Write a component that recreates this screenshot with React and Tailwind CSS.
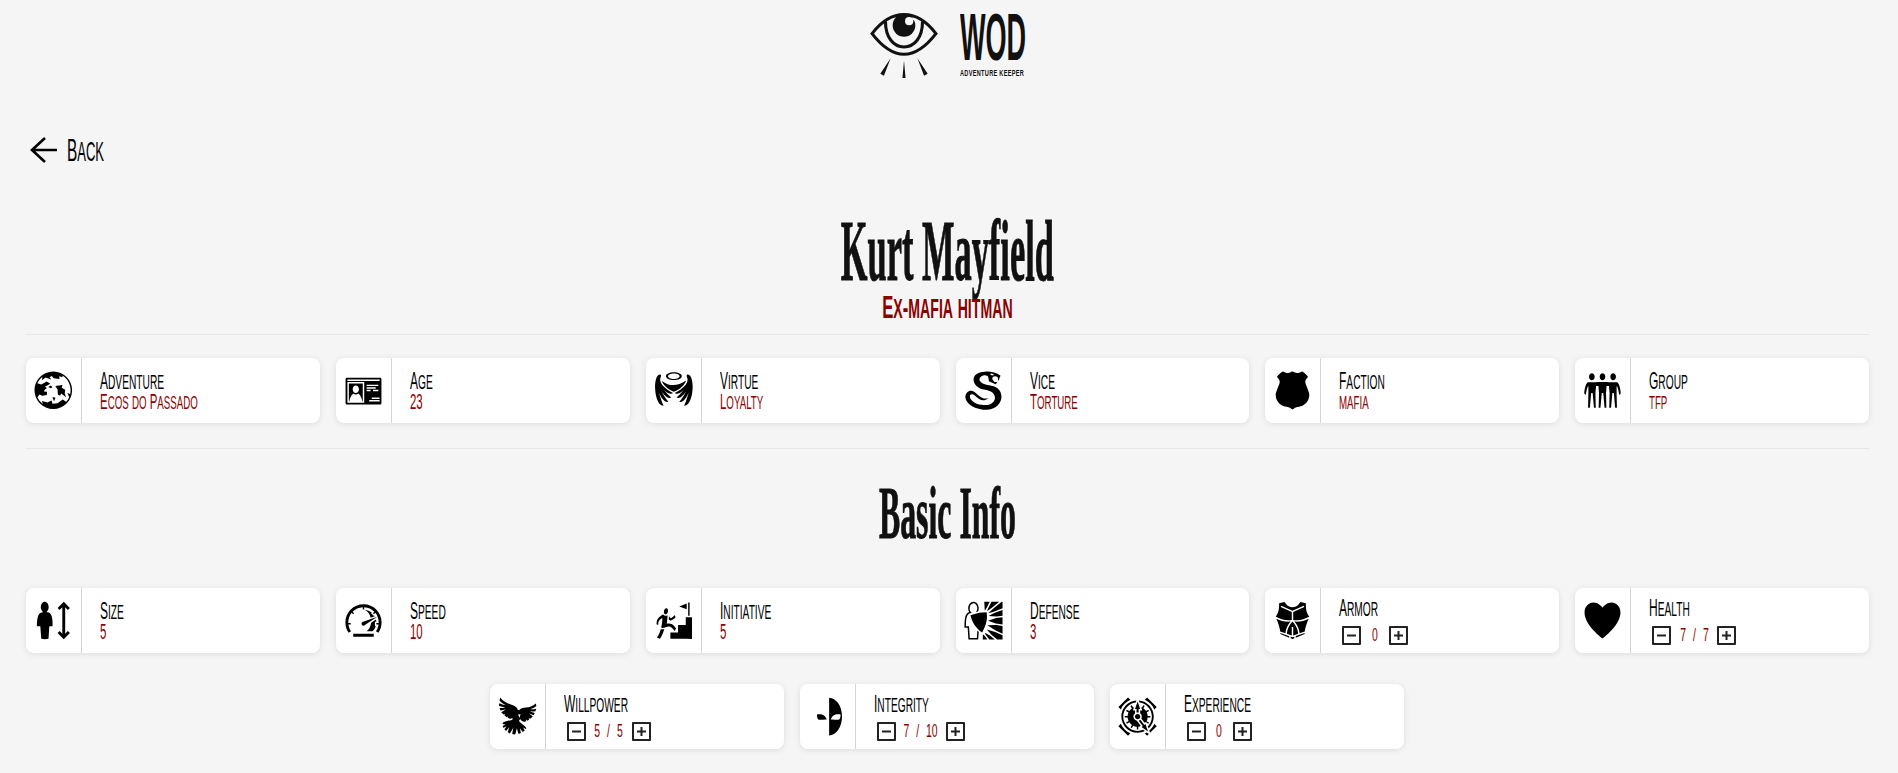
import React from 'react';
import {
  GiWorld, GiIdCard, GiAngelOutfit, GiSnake, GiPoliceBadge, GiThreeFriends,
  GiBodyHeight, GiSpeedometer, GiStairsGoal, GiSurroundedShield, GiChestArmor, GiHearts,
  GiDove, GiDoubleFaceMask, GiClockwork,
} from 'react-icons/gi';

const details = [
  { icon: GiWorld, label: 'Adventure', value: 'Ecos do Passado' },
  { icon: GiIdCard, label: 'Age', value: '23' },
  { icon: GiAngelOutfit, label: 'Virtue', value: 'Loyalty' },
  { icon: GiSnake, label: 'Vice', value: 'Torture' },
  { icon: GiPoliceBadge, label: 'Faction', value: 'mafia' },
  { icon: GiThreeFriends, label: 'Group', value: 'tfp' },
];

const basicInfo = [
  { icon: GiBodyHeight, label: 'Size', value: '5' },
  { icon: GiSpeedometer, label: 'Speed', value: '10' },
  { icon: GiStairsGoal, label: 'Initiative', value: '5' },
  { icon: GiSurroundedShield, label: 'Defense', value: '3' },
  { icon: GiChestArmor, label: 'Armor', value: '0', counter: 'w-[28px]' },
  { icon: GiHearts, label: 'Health', value: '7 / 7', counter: 'w-[46px]' },
];

const trackers = [
  { icon: GiDove, label: 'Willpower', value: '5 / 5', counter: 'w-[46px]' },
  { icon: GiDoubleFaceMask, label: 'Integrity', value: '7 / 10', counter: 'w-[50px]' },
  { icon: GiClockwork, label: 'Experience', value: '0', counter: 'w-[27px]' },
];

// the original font is all caps with slightly taller initials
function Caps({ text }) {
  return text.split(/([a-z]+)/).map((part, i) =>
    /^[a-z]/.test(part)
      ? <span key={i} className="text-[0.85em] uppercase">{part}</span>
      : part
  );
}

function StepButton({ plus }) {
  return (
    <button className="flex h-[19px] w-[19px] items-center justify-center rounded-[1px] border-2 border-[#222]">
      <svg width="11" height="11" viewBox="0 0 11 11" stroke="#222" strokeWidth="2">
        <path d={plus ? 'M1 5.5h9M5.5 1v9' : 'M1 5.5h9'} />
      </svg>
    </button>
  );
}

function StatCard({ item, className = '' }) {
  const Icon = item.icon;
  return (
    <div className={`flex h-[65px] rounded-lg bg-white shadow-[0_1px_6px_rgba(0,0,0,0.1)] ${className}`}>
      <div className="flex w-[56px] shrink-0 items-center justify-center border-r border-[#d5d5d5] text-black">
        <Icon size={41} />
      </div>
      <div className="flex min-w-0 flex-col justify-center pl-[18px]">
        <span className="block origin-left scale-x-[0.5] whitespace-nowrap text-[24px] leading-[22px] text-black">
          <Caps text={item.label} />
        </span>
        {item.counter ? (
          <div className="mt-[6px] flex items-center pl-[3px]">
            <StepButton />
            <span className={`flex justify-center ${item.counter}`}>
              <span className="inline-block scale-x-[0.58] whitespace-nowrap text-[18px] leading-[19px] text-[#8b0000] [word-spacing:7px]">
                {item.value}
              </span>
            </span>
            <StepButton plus />
          </div>
        ) : (
          <span className="block origin-left scale-x-[0.52] whitespace-nowrap text-[22px] leading-[18px] text-[#8b0000]">
            <Caps text={item.value} />
          </span>
        )}
      </div>
    </div>
  );
}

function Logo() {
  return (
    <div className="flex items-start justify-center gap-[22px] pt-[12px]">
      <svg width="68" height="68" viewBox="0 0 66 66" fill="none" stroke="#111" className="mt-[1px]">
        <path d="M2 20C12 7 22 1.5 33 1.5S54 7 64 20C54 33 44 40 33 40S12 33 2 20Z" strokeWidth="3" />
        <path d="M15 8C15 24 23 33 33 33S51 24 51 8" strokeWidth="3" />
        <circle cx="33" cy="12" r="11" fill="#111" stroke="none" />
        <circle cx="38" cy="8" r="4" fill="#f5f5f5" stroke="none" />
        <path d="M38 8C41 5 44 5 44 8" strokeWidth="2" stroke="#f5f5f5" />
        <path d="M33 46L31.5 63H34.5ZM10 59L13.5 61L20 44ZM56 59L52.5 61L46 44Z" fill="#111" stroke="none" />
      </svg>
      <div className="w-[66px] font-bold text-[#111]">
        <div className="w-max origin-left scale-x-[0.41] text-[66px] leading-[50px]">WOD</div>
        <div className="mt-[6px] w-max origin-left scale-x-[0.62] text-[9px] leading-[10px] tracking-[0.5px]">
          ADVENTURE KEEPER
        </div>
      </div>
    </div>
  );
}

export default function App() {
  return (
    <div className="min-h-screen bg-[#f5f5f5] pl-[26px] pr-[29px] font-['Liberation_Sans',sans-serif] text-black">
      <Logo />

      <div className="mt-[49px] flex h-[40px] items-center">
        <svg width="30" height="30" viewBox="0 0 30 30" fill="none" stroke="#000" strokeWidth="2.6" className="ml-[3px]">
          <path d="M28 15H3M16 3L3 15L16 27" />
        </svg>
        <span className="ml-[8px] block origin-left scale-x-[0.48] whitespace-nowrap text-[32px] leading-none">
          <Caps text="Back" />
        </span>
      </div>

      <div className="mt-[42px] flex flex-col items-center font-['Liberation_Serif',serif]">
        <h1 className="scale-x-[0.4] whitespace-nowrap text-[86px] font-bold leading-[78px] text-[#111] [-webkit-text-stroke:1px_#111]">
          Kurt Mayfield
        </h1>
        <p className="mt-[2px] scale-x-[0.52] whitespace-nowrap font-['Liberation_Sans',sans-serif] text-[32px] font-bold leading-[30px] text-[#8b0000]">
          <Caps text="Ex-mafia hitman" />
        </p>
      </div>

      <hr className="mt-[10px] border-[#e6e6e6]" />

      <div className="mt-[23px] grid grid-cols-6 gap-4">
        {details.map(item => <StatCard key={item.label} item={item} />)}
      </div>

      <hr className="mt-[25px] border-[#e6e6e6]" />

      <h2 className="mt-[29px] scale-x-[0.43] whitespace-nowrap text-center font-['Liberation_Serif',serif] text-[74px] font-bold leading-[70px] text-[#111] [-webkit-text-stroke:1px_#111]">
        Basic Info
      </h2>

      <div className="mt-[40px] grid grid-cols-6 gap-4">
        {basicInfo.map(item => <StatCard key={item.label} item={item} />)}
      </div>

      <div className="mt-[31px] flex justify-center gap-4 pb-[24px] pr-[2px]">
        {trackers.map(item => <StatCard key={item.label} item={item} className="w-[294px]" />)}
      </div>
    </div>
  );
}
